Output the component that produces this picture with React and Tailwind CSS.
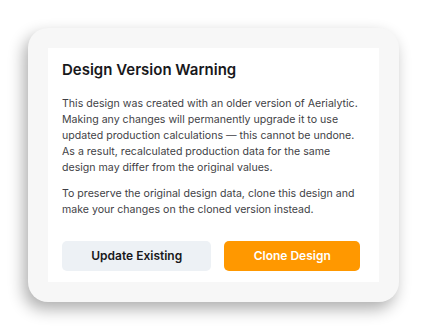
export default function App() {
  return (
    <div className="min-h-[330px] w-[428px] bg-white pl-[28px] pt-[28px] font-['Inter',sans-serif]">
      <div className="w-[371px] h-[274px] rounded-[20px] bg-[#f7f7f7] p-5 shadow-[-4px_7px_16px_rgba(0,0,0,0.32)]">
        <div className="h-full bg-white pl-[14px] pr-[19px] pt-[10px] pb-[11px] flex flex-col">
          <h2 className="text-[15px] leading-[24px] font-semibold text-[#18181b]">Design Version Warning</h2>
          <div className="mt-[14px] text-[10.6px] leading-[16px] text-[#3f3f46] whitespace-nowrap">
            <p>
              This design was created with an older version of Aerialytic.<br />
              Making any changes will permanently upgrade it to use<br />
              updated production calculations — this cannot be undone.<br />
              As a result, recalculated production data for the same<br />
              design may differ from the original values.
            </p>
            <p className="mt-[10px]">
              To preserve the original design data, clone this design and<br />
              make your changes on the cloned version instead.
            </p>
          </div>
          <div className="mt-auto flex gap-[13px]">
            <button className="flex-auto h-[30px] rounded-[5px] bg-[#edf1f5] text-[12px] font-semibold text-[#18181b]">
              Update Existing
            </button>
            <button className="flex-auto h-[30px] rounded-[5px] bg-[#ff9800] text-[12px] font-semibold text-white">
              Clone Design
            </button>
          </div>
        </div>
      </div>
    </div>
  )
}
